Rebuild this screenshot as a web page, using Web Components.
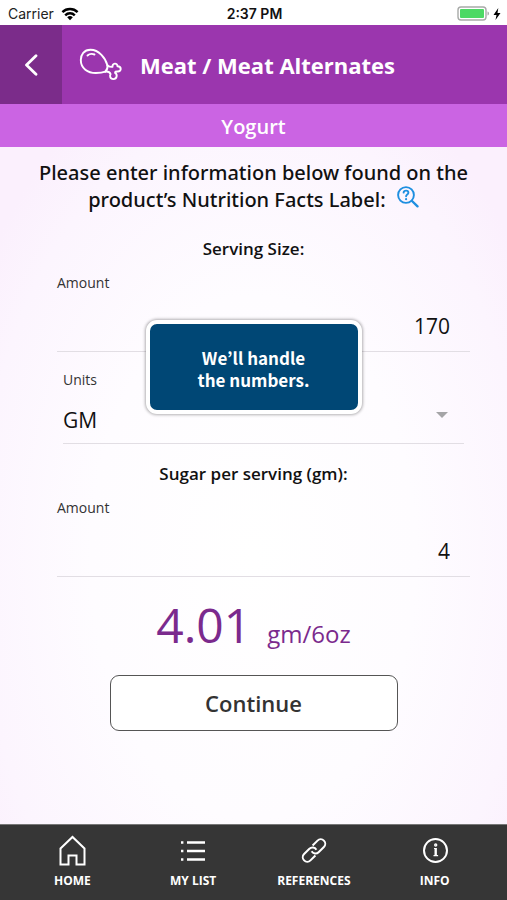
<!DOCTYPE html>
<html lang="en">
<head>
<meta charset="utf-8">
<meta name="viewport" content="width=device-width, initial-scale=1">
<title>Meat / Meat Alternates</title>
<style>
  body {
    margin: 0;
    min-height: 100vh;
    display: flex;
    flex-direction: column;
    font-family: "Open Sans", "Noto Sans", sans-serif;
    color: #111;
    background: radial-gradient(ellipse 64% 58% at 50% 62%, #fff 0%, #fefcff 50%, #fcf5fe 85%, #fbf0fd 100%);
  }
</style>
</head>
<body>
  <status-bar carrier="Carrier" time="2:37 PM"></status-bar>
  <page-header>
    <food-icon slot="icon"></food-icon>
    Meat / Meat Alternates
    <span slot="subtitle">Yogurt</span>
  </page-header>
  <nutrition-form>
    <form-section heading="Serving Size:">
      <number-field label="Amount" value="170"></number-field>
      <unit-select label="Units" options="GM,OZ"></unit-select>
    </form-section>
    <form-section heading="Sugar per serving (gm):">
      <number-field label="Amount" value="4"></number-field>
    </form-section>
    <result-value slot="result" unit="gm/6oz">4.01</result-value>
    <outline-button slot="action">Continue</outline-button>
  </nutrition-form>
  <tab-bar>
    <tab-item icon="home">HOME</tab-item>
    <tab-item icon="list">MY LIST</tab-item>
    <tab-item icon="link">REFERENCES</tab-item>
    <tab-item icon="info">INFO</tab-item>
  </tab-bar>
  <info-popup>We’ll handle<br>the numbers.</info-popup>

<script>
class BaseComponent extends HTMLElement {
  connectedCallback() {
    if (this.shadowRoot) return;
    const template = document.createElement('template');
    template.innerHTML = this.render();
    this.attachShadow({ mode: 'open' }).appendChild(template.content.cloneNode(true));
  }

  attr(name) {
    return this.getAttribute(name) || '';
  }
}

class StatusBar extends BaseComponent {
  render() {
    return `
      <style>
        :host {
          display: grid;
          grid-template-columns: 1fr auto 1fr;
          align-items: center;
          height: 25px;
          padding: 2px 6px 0 8px;
          box-sizing: border-box;
          background: #fff;
          font: 14px/20px Inter, "Liberation Sans", sans-serif;
          color: #222;
        }
        .left, .right { display: flex; align-items: center; gap: 7px; }
        .right { justify-content: flex-end; gap: 3px; }
        .time { font-weight: 600; color: #111; }
        svg { display: block; }
      </style>
      <div class="left">
        <span>${this.attr('carrier')}</span>
        <svg width="18" height="14" viewBox="0 0 18 14" fill="none" stroke="#000" stroke-width="2.4">
          <path d="M1.4 5.2a10.8 10.8 0 0 1 15.2 0"/>
          <path d="M4.2 8.3a6.8 6.8 0 0 1 9.6 0"/>
          <path d="M9 13.2 6.2 10.3a4 4 0 0 1 5.6 0z" fill="#000" stroke="none"/>
        </svg>
      </div>
      <span class="time">${this.attr('time')}</span>
      <div class="right">
        <svg width="33" height="15" viewBox="0 0 33 15">
          <rect x="1" y="1" width="28" height="13" rx="3" fill="#fff" stroke="#a8aaa8" stroke-width="1.4"/>
          <rect x="3" y="3" width="24" height="9" rx="1" fill="#4cd964"/>
          <path d="M30.5 5.5v4c2-.6 2-3.4 0-4z" fill="#a8aaa8"/>
        </svg>
        <svg width="8" height="14" viewBox="0 0 8 14">
          <path d="M5.3 1 .5 8h3L2.5 13 7.5 6h-3z" fill="#000"/>
        </svg>
      </div>
    `;
  }
}

class FoodIcon extends BaseComponent {
  render() {
    return `
      <style>
        :host { display: block; }
        svg { display: block; }
      </style>
      <svg width="44" height="34" viewBox="0 0 44 34" fill="none" stroke="#fff" stroke-width="1.9" stroke-linecap="round" stroke-linejoin="round">
        <path d="M28.5 17.5C26.5 10 20 1.8 11.5 1.8 5 1.8 1.8 6.5 1.8 12c0 8.5 7 13 15 13 4 0 7.5-.6 9.5-1.400"/>
        <path d="M28.5 17.5c.3 2.500-.6 4.600-2.200 6.100"/>
        <path d="M8.5 7.5c2-1.800 4.500-2 7-1"/>
        <path d="M28.5 17.5c2 1.300 3.600 1.600 5 1.300-.6-3.800 5-4.400 5-.6 4.300.1 4.200 5.500.2 5.300-1.800-.1-2.900.2-2.600 1.400 2.600 1.500 2 6-1.700 6.200-3.900 0-3.600-3.700-2.800-5-.8-2-3-2.700-5.300-2.500"/>
      </svg>
    `;
  }
}

class PageHeader extends BaseComponent {
  render() {
    return `
      <style>
        :host { display: block; color: #fff; }
        .bar { display: flex; height: 79px; background: #9b36ae; }
        button {
          width: 62px;
          padding: 0;
          border: 0;
          background: #7b2c8a;
          display: grid;
          place-items: center;
        }
        .title { display: flex; align-items: center; gap: 17px; padding-left: 17px; }
        h1 { margin: 0; font-size: 22px; line-height: 30px; font-weight: 700; }
        h2 {
          margin: 0;
          height: 43px;
          background: #cb64e3;
          text-align: center;
          font-size: 20px;
          line-height: 45px;
          font-weight: 600;
        }
      </style>
      <div class="bar">
        <button type="button" aria-label="Back">
          <svg width="14" height="22" viewBox="0 0 14 22" fill="none" stroke="#fff" stroke-width="2.8" stroke-linecap="round" stroke-linejoin="round">
            <path d="M12 1.8 2.5 11l9.5 9.2"/>
          </svg>
        </button>
        <div class="title">
          <slot name="icon"></slot>
          <h1><slot></slot></h1>
        </div>
      </div>
      <h2><slot name="subtitle"></slot></h2>
    `;
  }
}

class NutritionForm extends BaseComponent {
  render() {
    return `
      <style>
        :host { display: block; flex: 1; padding: 12px 32px 24px; }
        form { display: flex; flex-direction: column; gap: 18px; }
        p {
          margin: 0 0 6px;
          text-align: center;
          font-family: "Noto Sans", "Open Sans", sans-serif;
          font-size: 20px;
          line-height: 27px;
          font-weight: 500;
        }
        .help { display: inline-block; margin-left: 6px; vertical-align: top; }
        svg { display: block; }
      </style>
      <form>
        <p>Please enter information below found on the product’s Nutrition Facts Label:
          <a href="#label" class="help" aria-label="Show a sample label">
            <svg width="22" height="22" viewBox="0 0 22 22" fill="none" stroke="#1e8fe0" stroke-linecap="round">
              <circle cx="9" cy="9" r="7.9" stroke-width="1.9"/>
              <path d="M15 15l5.5 5.3" stroke-width="2.4"/>
              <path d="M6.6 6.6c.3-2.6 4.8-2.6 4.8.1 0 1.7-2.3 1.8-2.3 3.6" stroke-width="1.9"/>
              <circle cx="9.1" cy="13.2" r=".5" stroke-width="1.2"/>
            </svg>
          </a>
        </p>
        <slot></slot>
        <slot name="result"></slot>
        <slot name="action"></slot>
      </form>
    `;
  }
}

class FormSection extends BaseComponent {
  render() {
    return `
      <style>
        :host { display: block; padding: 0 5px 0 25px; }
        h3 {
          margin: 0 20px 12px 0;
          text-align: center;
          font-size: 17px;
          line-height: 24px;
          font-weight: 600;
        }
        .fields { display: flex; flex-direction: column; gap: 18px; }
      </style>
      <h3>${this.attr('heading')}</h3>
      <div class="fields"><slot></slot></div>
    `;
  }
}

class NumberField extends BaseComponent {
  render() {
    return `
      <style>
        :host { display: block; }
        label { display: block; font-size: 14px; line-height: 20px; color: #333; }
        input {
          display: block;
          width: 100%;
          height: 59px;
          box-sizing: border-box;
          padding: 7px 20px 0;
          border: 0;
          border-bottom: 1px solid #e2dee4;
          background: none;
          font: inherit;
          font-size: 21px;
          color: #111;
          text-align: right;
        }
      </style>
      <label for="amount">${this.attr('label')}</label>
      <input id="amount" type="text" inputmode="decimal" value="${this.attr('value')}">
    `;
  }
}

class UnitSelect extends BaseComponent {
  render() {
    const options = this.attr('options').split(',').map(o => `<option>${o}</option>`).join('');
    return `
      <style>
        :host { display: block; padding: 0 6px; }
        label { display: block; font-size: 14px; line-height: 20px; color: #333; }
        .control {
          display: grid;
          grid-template-columns: 1fr 28px;
          align-items: center;
          border-bottom: 1px solid #e2dee4;
        }
        select {
          grid-area: 1 / 1 / 2 / 3;
          appearance: none;
          height: 53px;
          padding: 7px 0 0;
          border: 0;
          background: none;
          font: inherit;
          font-size: 21px;
          color: #111;
        }
        svg { grid-area: 1 / 2; margin-bottom: 4px; pointer-events: none; }
      </style>
      <label for="units">${this.attr('label')}</label>
      <div class="control">
        <select id="units">${options}</select>
        <svg width="12" height="6" viewBox="0 0 12 6"><path d="M0 0h12L6 6z" fill="#a5a5a7"/></svg>
      </div>
    `;
  }
}

class ResultValue extends BaseComponent {
  render() {
    return `
      <style>
        :host {
          display: flex;
          justify-content: center;
          align-items: baseline;
          gap: 16px;
          padding: 2px 0 4px;
          color: #7b2a8d;
          font-size: 48px;
          line-height: 56px;
        }
        small { font-size: 24px; line-height: 28px; }
      </style>
      <span><slot></slot></span>
      <small>${this.attr('unit')}</small>
    `;
  }
}

class OutlineButton extends BaseComponent {
  render() {
    return `
      <style>
        :host { display: flex; justify-content: center; }
        button {
          width: 288px;
          height: 56px;
          border: 1px solid #555;
          border-radius: 9px;
          background: #fff;
          color: #333;
          font: inherit;
          font-size: 22px;
          font-weight: 600;
        }
      </style>
      <button type="button"><slot></slot></button>
    `;
  }
}

class TabBar extends BaseComponent {
  render() {
    return `
      <style>
        :host { display: block; background: #363636; border-top: 1px solid #777; }
        nav { display: grid; grid-template-columns: repeat(4, 1fr); padding: 0 12px; }
      </style>
      <nav><slot></slot></nav>
    `;
  }
}

const TAB_ICONS = {
  home: '<path d="M4.5 13.5 16.5 2l12 11.5V29.5H20.5v-9h-8v9h-8z"/>',
  list: '<path d="M10 7.5h18M10 16h18M10 24.5h18" stroke-width="2.4"/><path d="M4 7.5h2.4M4 16h2.4M4 24.5h2.4" stroke-width="2.4"/>',
  link: '<g transform="rotate(-45 16 15.5)"><path d="M13.5 20H6.5a4.500 4.500 0 0 1 0-9h7.500a4.500 4.500 0 0 1 4.300 5.600"/><path d="M18.500 11h7a4.500 4.500 0 0 1 0 9h-7.500a4.500 4.500 0 0 1-4.300-5.600"/></g>',
  info: '<circle cx="16.5" cy="15.5" r="11.5"/><path d="M15 13.500h1.800M14.500 20.700h4.600" stroke-width="1.200"/><path d="M16.700 13v8" stroke-width="2.400"/><circle cx="16.700" cy="10" r=".7"/>'
};

class TabItem extends BaseComponent {
  render() {
    return `
      <style>
        :host { display: block; }
        a {
          display: flex;
          flex-direction: column;
          align-items: center;
          gap: 6px;
          padding: 10px 0 11px;
          color: #fff;
          text-decoration: none;
          font-size: 12px;
          line-height: 16px;
          font-weight: 700;
        }
      </style>
      <a href="#${this.attr('icon')}">
        <svg width="32" height="32" viewBox="0 0 32 32" fill="none" stroke="#fff" stroke-width="2">${TAB_ICONS[this.attr('icon')]}</svg>
        <span><slot></slot></span>
      </a>
    `;
  }
}

class InfoPopup extends BaseComponent {
  render() {
    return `
      <style>
        :host {
          position: absolute;
          top: 320px;
          left: 50%;
          transform: translateX(-50%);
          width: 216px;
          height: 94px;
          box-sizing: border-box;
          display: grid;
          place-items: center;
          padding-top: 3px;
          border: 4px solid #fff;
          border-radius: 11px;
          background: #004775;
          box-shadow: 0 0 3px 1px rgba(0, 0, 0, 0.3);
          color: #fff;
          font: 700 17px/22px "Noto Sans CJK KR", "Open Sans", sans-serif;
          text-align: center;
        }
      </style>
      <div role="status"><slot></slot></div>
    `;
  }
}

customElements.define('status-bar', StatusBar);
customElements.define('food-icon', FoodIcon);
customElements.define('page-header', PageHeader);
customElements.define('nutrition-form', NutritionForm);
customElements.define('form-section', FormSection);
customElements.define('number-field', NumberField);
customElements.define('unit-select', UnitSelect);
customElements.define('result-value', ResultValue);
customElements.define('outline-button', OutlineButton);
customElements.define('tab-bar', TabBar);
customElements.define('tab-item', TabItem);
customElements.define('info-popup', InfoPopup);
</script>
</body>
</html>
